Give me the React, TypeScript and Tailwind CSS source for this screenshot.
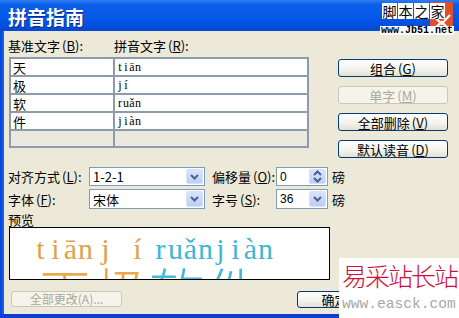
import type { ReactNode } from "react";

const cjk = "font-['Noto_Sans_CJK_SC',sans-serif]";
const serif = "font-['Liberation_Serif',serif]";

const Key = ({ c }: { c: string }) => (
  <>
    <span className="ml-[2px]">(</span>
    <span className="underline underline-offset-[1px]">{c}</span>)
  </>
);

// SimSun-like fixed pitch latin: every letter sits in its own cell
const Pitch = ({ text, w }: { text: string; w: string }) => (
  <span className="inline-flex">
    {Array.from(text).map((ch, i) => (
      <span key={i} className={`inline-block text-center ${w}`}>
        {ch}
      </span>
    ))}
  </span>
);

const XpButton = ({
  children,
  disabled,
  className = "",
}: {
  children: ReactNode;
  disabled?: boolean;
  className?: string;
}) => (
  <div
    className={`flex items-center justify-center rounded-[3px] border leading-none ${
      disabled
        ? "border-[#c9c7ba] bg-[#f5f4ea] text-[#aca899]"
        : "border-[#003c74] bg-[linear-gradient(to_bottom,#ffffff,#f3f2ec_60%,#e3e0d2)] text-black"
    } ${className}`}
  >
    {children}
  </div>
);

const Chevron = ({ up }: { up?: boolean }) => (
  <svg width="9" height="6" viewBox="0 0 9 6">
    <path
      d={up ? "M1 5 L4.5 1.5 L8 5" : "M1 1 L4.5 4.5 L8 1"}
      fill="none"
      stroke="#4d6185"
      strokeWidth="2"
    />
  </svg>
);

const arrowBox =
  "rounded-[2px] border border-[#d6e1fb] bg-[linear-gradient(to_bottom,#d9e4fd,#bccdf7)]";

const Combo = ({ value }: { value: string }) => (
  <div className="flex h-full w-[116px] items-center border border-[#7f9db9] bg-white pl-[3px]">
    <span className="flex-1 leading-none">{value}</span>
    <div className={`mr-[1px] flex h-[calc(100%-2px)] w-[17px] items-center justify-center ${arrowBox}`}>
      <Chevron />
    </div>
  </div>
);

const rows = [
  ["天", "tiān"],
  ["极", "jí"],
  ["软", "ruǎn"],
  ["件", "jiàn"],
];

export default function App() {
  return (
    <div className={`relative h-[318px] w-[459px] overflow-hidden bg-[#ece9d8] text-[13px] text-black ${cjk}`}>
      <div className="flex h-full flex-col">
        {/* title bar */}
        <div className="flex h-[31px] items-center bg-[linear-gradient(to_bottom,#2f7cf0_0%,#0a5fe9_15%,#0556e6_60%,#0349d4_100%)] pl-[8px] pt-[1px]">
          <span className="text-[19px] font-bold leading-none text-white [text-shadow:1px_1px_0_#0b2a8a]">
            拼音指南
          </span>
        </div>

        <div className="flex min-h-0 flex-1">
          <div className="w-[4px] bg-[linear-gradient(to_right,#0842d6,#166aee)]" />
          <div className="flex-1 pl-[4px] pt-[8px]">
            {/* list + buttons */}
            <div className="flex">
              <div className="w-[300px]">
                <div className="flex h-[14px] items-center leading-[14px]">
                  <span className="w-[106px]">
                    基准文字<Key c="B" />:
                  </span>
                  <span>
                    拼音文字<Key c="R" />:
                  </span>
                </div>
                <div className="ml-[1px] mt-[4px] grid w-[300px] grid-cols-[102px_1fr] gap-[2px] bg-[#8d9bab] p-[2px]">
                  {rows.map(([ch, py]) => (
                    <div key={ch} className="contents">
                      <div className="flex h-[16px] items-center bg-white pl-[2px] leading-none">{ch}</div>
                      <div className={`flex h-[16px] items-center bg-white pl-[2px] text-[12px] leading-none ${serif}`}>
                        <Pitch text={py} w="w-[6px]" />
                      </div>
                    </div>
                  ))}
                  <div className="h-[15px] bg-[#ebe9df]" />
                  <div className="h-[15px] bg-[#ebe9df]" />
                </div>
              </div>
              <div className="ml-[30px] flex flex-col gap-[9px] pt-[20px]">
                <XpButton className="h-[18px] w-[110px]">
                  组合<Key c="G" />
                </XpButton>
                <XpButton disabled className="h-[18px] w-[110px]">
                  单字<Key c="M" />
                </XpButton>
                <XpButton className="h-[18px] w-[110px]">
                  全部删除<Key c="V" />
                </XpButton>
                <XpButton className="h-[18px] w-[110px]">
                  默认读音<Key c="D" />
                </XpButton>
              </div>
            </div>

            {/* options */}
            <div className="mt-[9px] flex h-[19px] items-center">
              <span className="w-[81px] leading-none">
                对齐方式<Key c="L" />:
              </span>
              <Combo value="1-2-1" />
              <span className="ml-[7px] w-[64px] leading-none">
                偏移量<Key c="O" />:
              </span>
              <div className="flex h-full w-[52px] items-center border border-[#7f9db9] bg-white pl-[3px]">
                <span className="flex-1 font-['Liberation_Sans',sans-serif] text-[12px] leading-none">0</span>
                <div className={`mr-[1px] flex h-[calc(100%-2px)] w-[17px] flex-col items-center justify-center gap-[1px] ${arrowBox}`}>
                  <Chevron up />
                  <Chevron />
                </div>
              </div>
              <span className="ml-[4px] leading-none">磅</span>
            </div>
            <div className="mt-[3px] flex h-[20px] items-center">
              <span className="w-[81px] leading-none">
                字体<Key c="F" />:
              </span>
              <Combo value="宋体" />
              <span className="ml-[7px] w-[64px] leading-none">
                字号<Key c="S" />:
              </span>
              <div className="flex h-full w-[52px] items-center border border-[#7f9db9] bg-white pl-[3px]">
                <span className="flex-1 font-['Liberation_Sans',sans-serif] text-[12px] leading-none">36</span>
                <div className={`mr-[1px] flex h-[calc(100%-2px)] w-[17px] items-center justify-center ${arrowBox}`}>
                  <Chevron />
                </div>
              </div>
              <span className="ml-[4px] leading-none">磅</span>
            </div>

            {/* preview */}
            <div className="mt-[4px] h-[14px] leading-[14px]">预览</div>
            <div className="ml-[1px] h-[53px] w-[321px] overflow-hidden border border-black bg-white">
              <div className={`flex pl-[23px] pt-[6px] text-[30px] leading-[30px] ${serif}`}>
                <span className="text-[#dfa34b]">
                  <Pitch text="tiān" w="w-[15px]" />
                </span>
                <span className="ml-[5px] text-[#dfa34b]">
                  <Pitch text="j" w="w-[15px]" />
                </span>
                <span className="ml-[17px] text-[#dfa34b]">
                  <Pitch text="í" w="w-[15px]" />
                </span>
                <span className="ml-[8px] text-[#3fb6d4]">
                  <Pitch text="ruǎnjiàn" w="w-[15px]" />
                </span>
              </div>
              <div className="-mt-[1px] flex pl-[27px] text-[56px] font-light leading-[56px]">
                <span className="text-[#eaa84a]">天极</span>
                <span className="text-[#45bad8]">软件</span>
              </div>
            </div>

            {/* bottom buttons */}
            <div className="mt-[11px] flex items-start">
              <XpButton disabled className="ml-[3px] h-[16px] w-[111px] text-[12px]">
                全部更改(A)...
              </XpButton>
              <XpButton className="ml-[175px] h-[17px] w-[75px]">确定</XpButton>
            </div>
          </div>
        </div>
        <div className="h-[4px] bg-[#0a3fd0]" />
      </div>

      {/* jb51 watermark */}
      <svg className="absolute left-[430px] top-[2px]" width="23" height="30" viewBox="0 0 23 30">
        <rect width="23" height="30" fill="#e0502c" />
        <path d="M3 13 L11.5 22 L20 13 M3 28 L11.5 20 L20 28" fill="none" stroke="#fff" strokeWidth="2.2" />
      </svg>
      <div className="absolute left-[382px] top-[3px] flex gap-[1px]">
        {["脚", "本", "之", "家"].map((c) => (
          <span key={c} className="h-[16px] w-[15px] bg-white text-center text-[14px] leading-[16px] text-black">
            {c}
          </span>
        ))}
      </div>
      <div className="absolute left-[380px] top-[26px] bg-white px-[1px] font-['Liberation_Mono',monospace] text-[10px] font-bold leading-[9px] text-black">
        www.Jb51.net
      </div>

      {/* easck watermark */}
      <div className="absolute bottom-0 right-0 h-[60px] w-[120px] bg-white pl-[3px]">
        <div className="mt-[1px] text-[25px] font-light leading-[32px] tracking-[-2px] text-[#d0103a]">易采站长站</div>
        <div className="mt-[6px] font-['Liberation_Mono',monospace] text-[14.6px] leading-[14px] text-[#a8a8a8]">
          www.easck.com
        </div>
      </div>
    </div>
  );
}
